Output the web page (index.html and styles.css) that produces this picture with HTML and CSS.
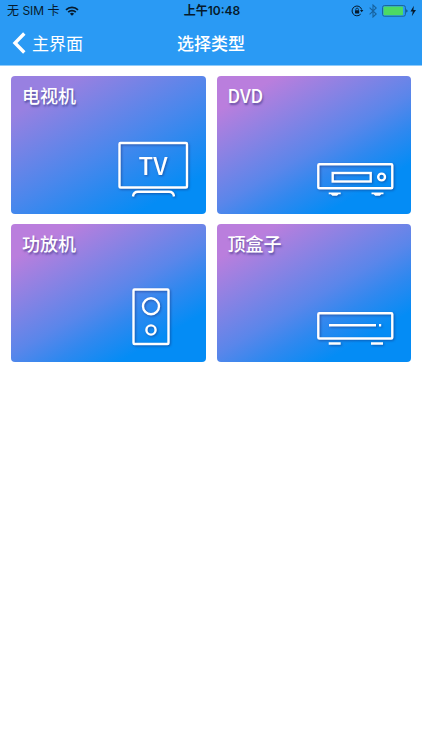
FILE: index.html
```html
<!DOCTYPE html>
<html lang="zh-CN">
<head>
<meta charset="utf-8">
<meta name="viewport" content="width=device-width, initial-scale=1">
<title>选择类型</title>
<link rel="stylesheet" href="styles.css">
</head>
<body>
<header class="header">
  <div class="status">
    <div class="status-left">
      <span>无 SIM 卡</span>
      <svg width="14" height="10" viewBox="0 0 14 10" aria-hidden="true">
        <g fill="none" stroke="#061a2c" stroke-width="1.7"><path d="M1 3.9a8.6 8.6 0 0 1 12 0"/><path d="M3.2 6.2a5.4 5.4 0 0 1 7.6 0"/></g>
        <path d="M7 9.8 4.9 7.7a3 3 0 0 1 4.2 0z" fill="#061a2c"/>
      </svg>
    </div>
    <time class="time">上午10:48</time>
    <div class="status-right">
      <svg width="13" height="12" viewBox="0 0 13 12" aria-hidden="true">
        <path d="M9.7 9.1A4.9 4.9 0 1 1 10.700 4.600" fill="none" stroke="#061a2c" stroke-width="1"/>
        <path d="M9 5h3.400l-1.700 2.200z" fill="#061a2c"/>
        <rect x="4" y="5.2" width="4.200" height="3.300" rx=".4" fill="#061a2c"/>
        <path d="M4.800 5.300V4.400a1.300 1.300 0 0 1 2.600 0v.9" fill="none" stroke="#061a2c" stroke-width=".8"/>
      </svg>
      <svg width="8" height="14" viewBox="0 0 8 14" aria-hidden="true">
        <path d="M.6 3.700 7.200 10 4 13V1L7.200 4 .6 10.300" fill="none" stroke="#17639f" stroke-width="1.1"/>
      </svg>
      <svg width="35" height="12" viewBox="0 0 35 12" aria-hidden="true">
        <rect x=".6" y=".6" width="22.800" height="10.600" rx="1.800" fill="none" stroke="#1a6097"/>
        <rect x="1.500" y="1.500" width="19.500" height="8.800" rx=".8" fill="#4cd964"/>
        <path d="M24.400 4.200c1.400.4 1.400 3 0 3.400z" fill="#0d3a60"/>
        <path d="M31.800.800 28.500 6.600h2.300l-1 4.600 4.200-6.200h-2.600z" fill="#061a2c"/>
      </svg>
    </div>
  </div>
  <nav class="nav">
    <a class="back" href="#">
      <svg width="14" height="22" viewBox="0 0 14 22" aria-hidden="true"><path d="M12.300 1.500 3 11l9.300 9.500" fill="none" stroke="#fff" stroke-width="3.400"/></svg>
      <span>主界面</span>
    </a>
    <h1 class="title">选择类型</h1>
  </nav>
</header>
<main class="grid">
  <a class="card card-soft" href="#">
    <span class="label">电视机</span>
    <svg class="icon" viewBox="0 0 80 64" aria-hidden="true">
      <rect x="8.500" y="7" width="67.500" height="44.500" rx="1"/>
      <path d="M22 60.500q.5-4.700 5-4.700h31q4.500 0 5 4.700"/>
      <text x="42" y="39" text-anchor="middle">TV</text>
    </svg>
  </a>
  <a class="card" href="#">
    <span class="label">DVD</span>
    <svg class="icon" viewBox="0 0 80 64" aria-hidden="true">
      <rect x="2.300" y="28.300" width="74" height="24" rx="1"/>
      <rect x="16.700" y="37" width="38" height="8.500"/>
      <circle cx="65.600" cy="41" r="3.400"/>
      <path class="solid" d="M12.700 56.500h12v1.800h-2.200l-1.500 1.500h-4.600l-1.500-1.500h-2.200zM55.500 56.500h12v1.800h-2.200l-1.500 1.500h-4.600l-1.500-1.500h-2.200z"/>
    </svg>
  </a>
  <a class="card" href="#">
    <span class="label">功放机</span>
    <svg class="icon" viewBox="0 0 80 64" aria-hidden="true">
      <rect x="22.500" y="5.500" width="35" height="54.500" rx="1"/>
      <circle cx="40" cy="22.300" r="8"/>
      <circle cx="40" cy="46" r="4.600"/>
    </svg>
  </a>
  <a class="card" href="#">
    <span class="label">顶盒子</span>
    <svg class="icon" viewBox="0 0 80 64" aria-hidden="true">
      <rect x="2.300" y="29.300" width="74" height="25.200" rx="1"/>
      <path d="M13 41.200h47M63 41.200h2.200M12.700 59.500h12M55 59.500h12"/>
    </svg>
  </a>
</main>
</body>
</html>
```
FILE: styles.css
```css
* { box-sizing: border-box; }

body {
  margin: 0;
  background: #fff;
  font-family: "Noto Sans CJK SC", sans-serif;
}

a { color: inherit; text-decoration: none; }
svg { display: block; flex: none; }

.header {
  background: #2a9af4;
  border-bottom: 1px solid #8fcbfa;
}

.status {
  display: grid;
  grid-template-columns: 1fr auto 1fr;
  align-items: center;
  height: 21px;
  padding: 0 5px 0 7px;
  color: #061a2c;
  font-family: Inter, "Noto Sans CJK SC", sans-serif;
  font-size: 12px;
  line-height: 20px;
}

.status-left,
.status-right {
  display: flex;
  align-items: center;
  gap: 5px;
}

.status-right { justify-content: flex-end; }
.time { font-weight: 600; }

.nav {
  display: grid;
  grid-template-columns: 1fr auto 1fr;
  align-items: center;
  height: 44px;
  padding: 0 12px;
  color: #fff;
}

.back {
  display: flex;
  align-items: center;
  gap: 6px;
  font-size: 17px;
  line-height: 24px;
}

.title {
  margin: 0;
  font-size: 17px;
  font-weight: 500;
  line-height: 24px;
}

.grid {
  display: grid;
  grid-template-columns: 1fr 1fr;
  gap: 10px 11px;
  padding: 10px 11px;
}

.card {
  display: flex;
  flex-direction: column;
  justify-content: space-between;
  min-height: 138px;
  padding: 7px 15px 14px 11px;
  border-radius: 4px;
  background: linear-gradient(150deg, #ba7edd 14%, #5a86ea 52%, #2f88ef 65%, #048cf5 80%);
  color: #fff;
}

.card-soft {
  background: linear-gradient(150deg, #9880e1 16%, #4a87ec 52%, #2689f0 68%, #048cf5 84%);
}

.label {
  font-size: 18px;
  font-weight: 500;
  line-height: 24px;
  text-shadow: 1px 2px 2px rgba(30, 40, 110, 0.5);
}

.icon {
  align-self: flex-end;
  width: 80px;
  height: 64px;
  fill: none;
  stroke: #fff;
  stroke-width: 2.4px;
  filter: drop-shadow(1px 1px 1px rgba(20, 40, 110, 0.5));
}

.icon text {
  fill: #fff;
  stroke: none;
  font-family: "Noto Sans CJK SC", sans-serif;
  font-size: 24px;
  font-weight: 500;
}

.icon .solid {
  fill: #fff;
  stroke: none;
}
```
